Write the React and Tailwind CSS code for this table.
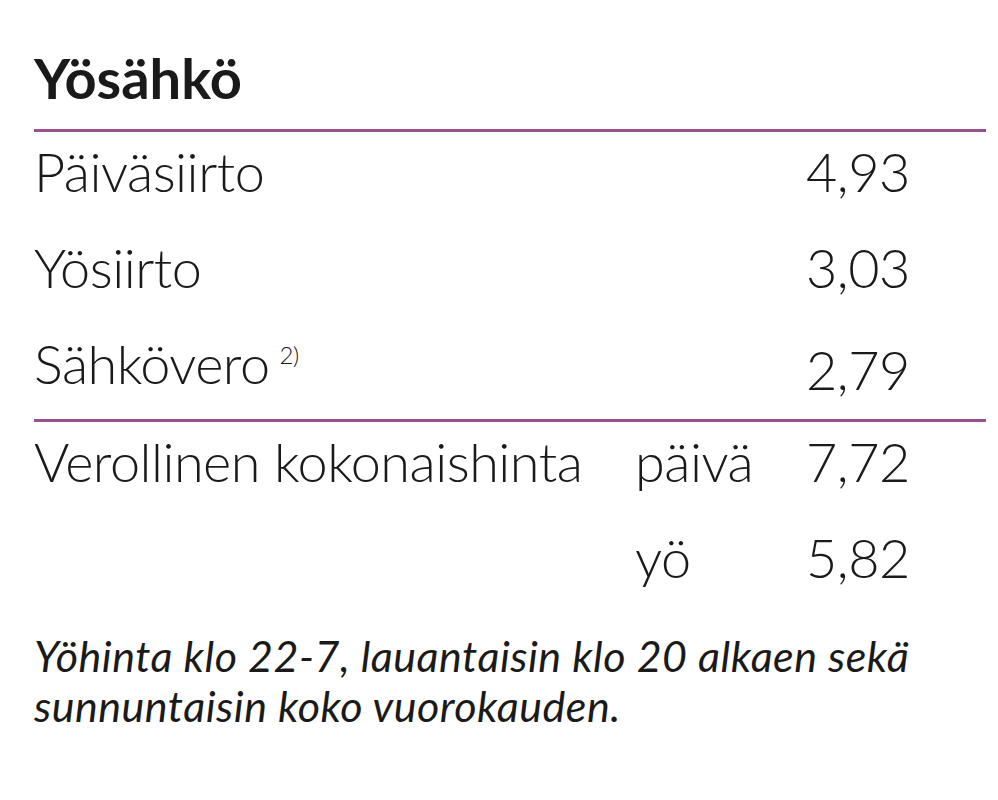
export default function App() {
  const rows = [
    { label: "Päiväsiirto", value: "4,93" },
    { label: "Yösiirto", value: "3,03" },
    { label: "Sähkövero", sup: "2)", value: "2,79" },
  ];

  const rowCls =
    "grid grid-cols-[1fr_171px_100px] h-[80px] items-center text-[54px] leading-[80px] font-light tracking-[-0.5px] pr-[80px] whitespace-nowrap";

  return (
    <main
      className="min-h-[800px] bg-white text-[#1a1a1a] px-[34px] pt-[48px] w-[998px]"
      style={{ fontFamily: "Lato, 'Noto Sans', sans-serif" }}
    >
      <div className="w-[952px]">
        <h1 className="text-[56px] leading-[60px] font-bold">Yösähkö</h1>
        <div className="mt-[21px] h-[3px] bg-[#98508f]" />
        <div className="flex flex-col gap-[16px]">
          {rows.map((r) => (
            <div key={r.label} className={rowCls}>
              <span>
                {r.label}
                {r.sup && (
                  <span className="text-[24px] ml-[10px] relative top-[-20px] align-baseline">
                    {r.sup}
                  </span>
                )}
              </span>
              <span />
              <span className="text-right">{r.value}</span>
            </div>
          ))}
        </div>
        <div className="mt-[15px] h-[3px] bg-[#98508f]" />
        <div className="flex flex-col gap-[16px]">
          <div className={rowCls}>
            <span>Verollinen kokonaishinta</span>
            <span>päivä</span>
            <span className="text-right">7,72</span>
          </div>
          <div className={rowCls}>
            <span />
            <span>yö</span>
            <span className="text-right">5,82</span>
          </div>
        </div>
        <p className="mt-[33px] text-[43px] leading-[50px] italic tracking-[0.5px] whitespace-nowrap">
          Yöhinta klo 22-7, lauantaisin klo 20 alkaen sekä
          <br />
          sunnuntaisin koko vuorokauden.
        </p>
      </div>
    </main>
  );
}
